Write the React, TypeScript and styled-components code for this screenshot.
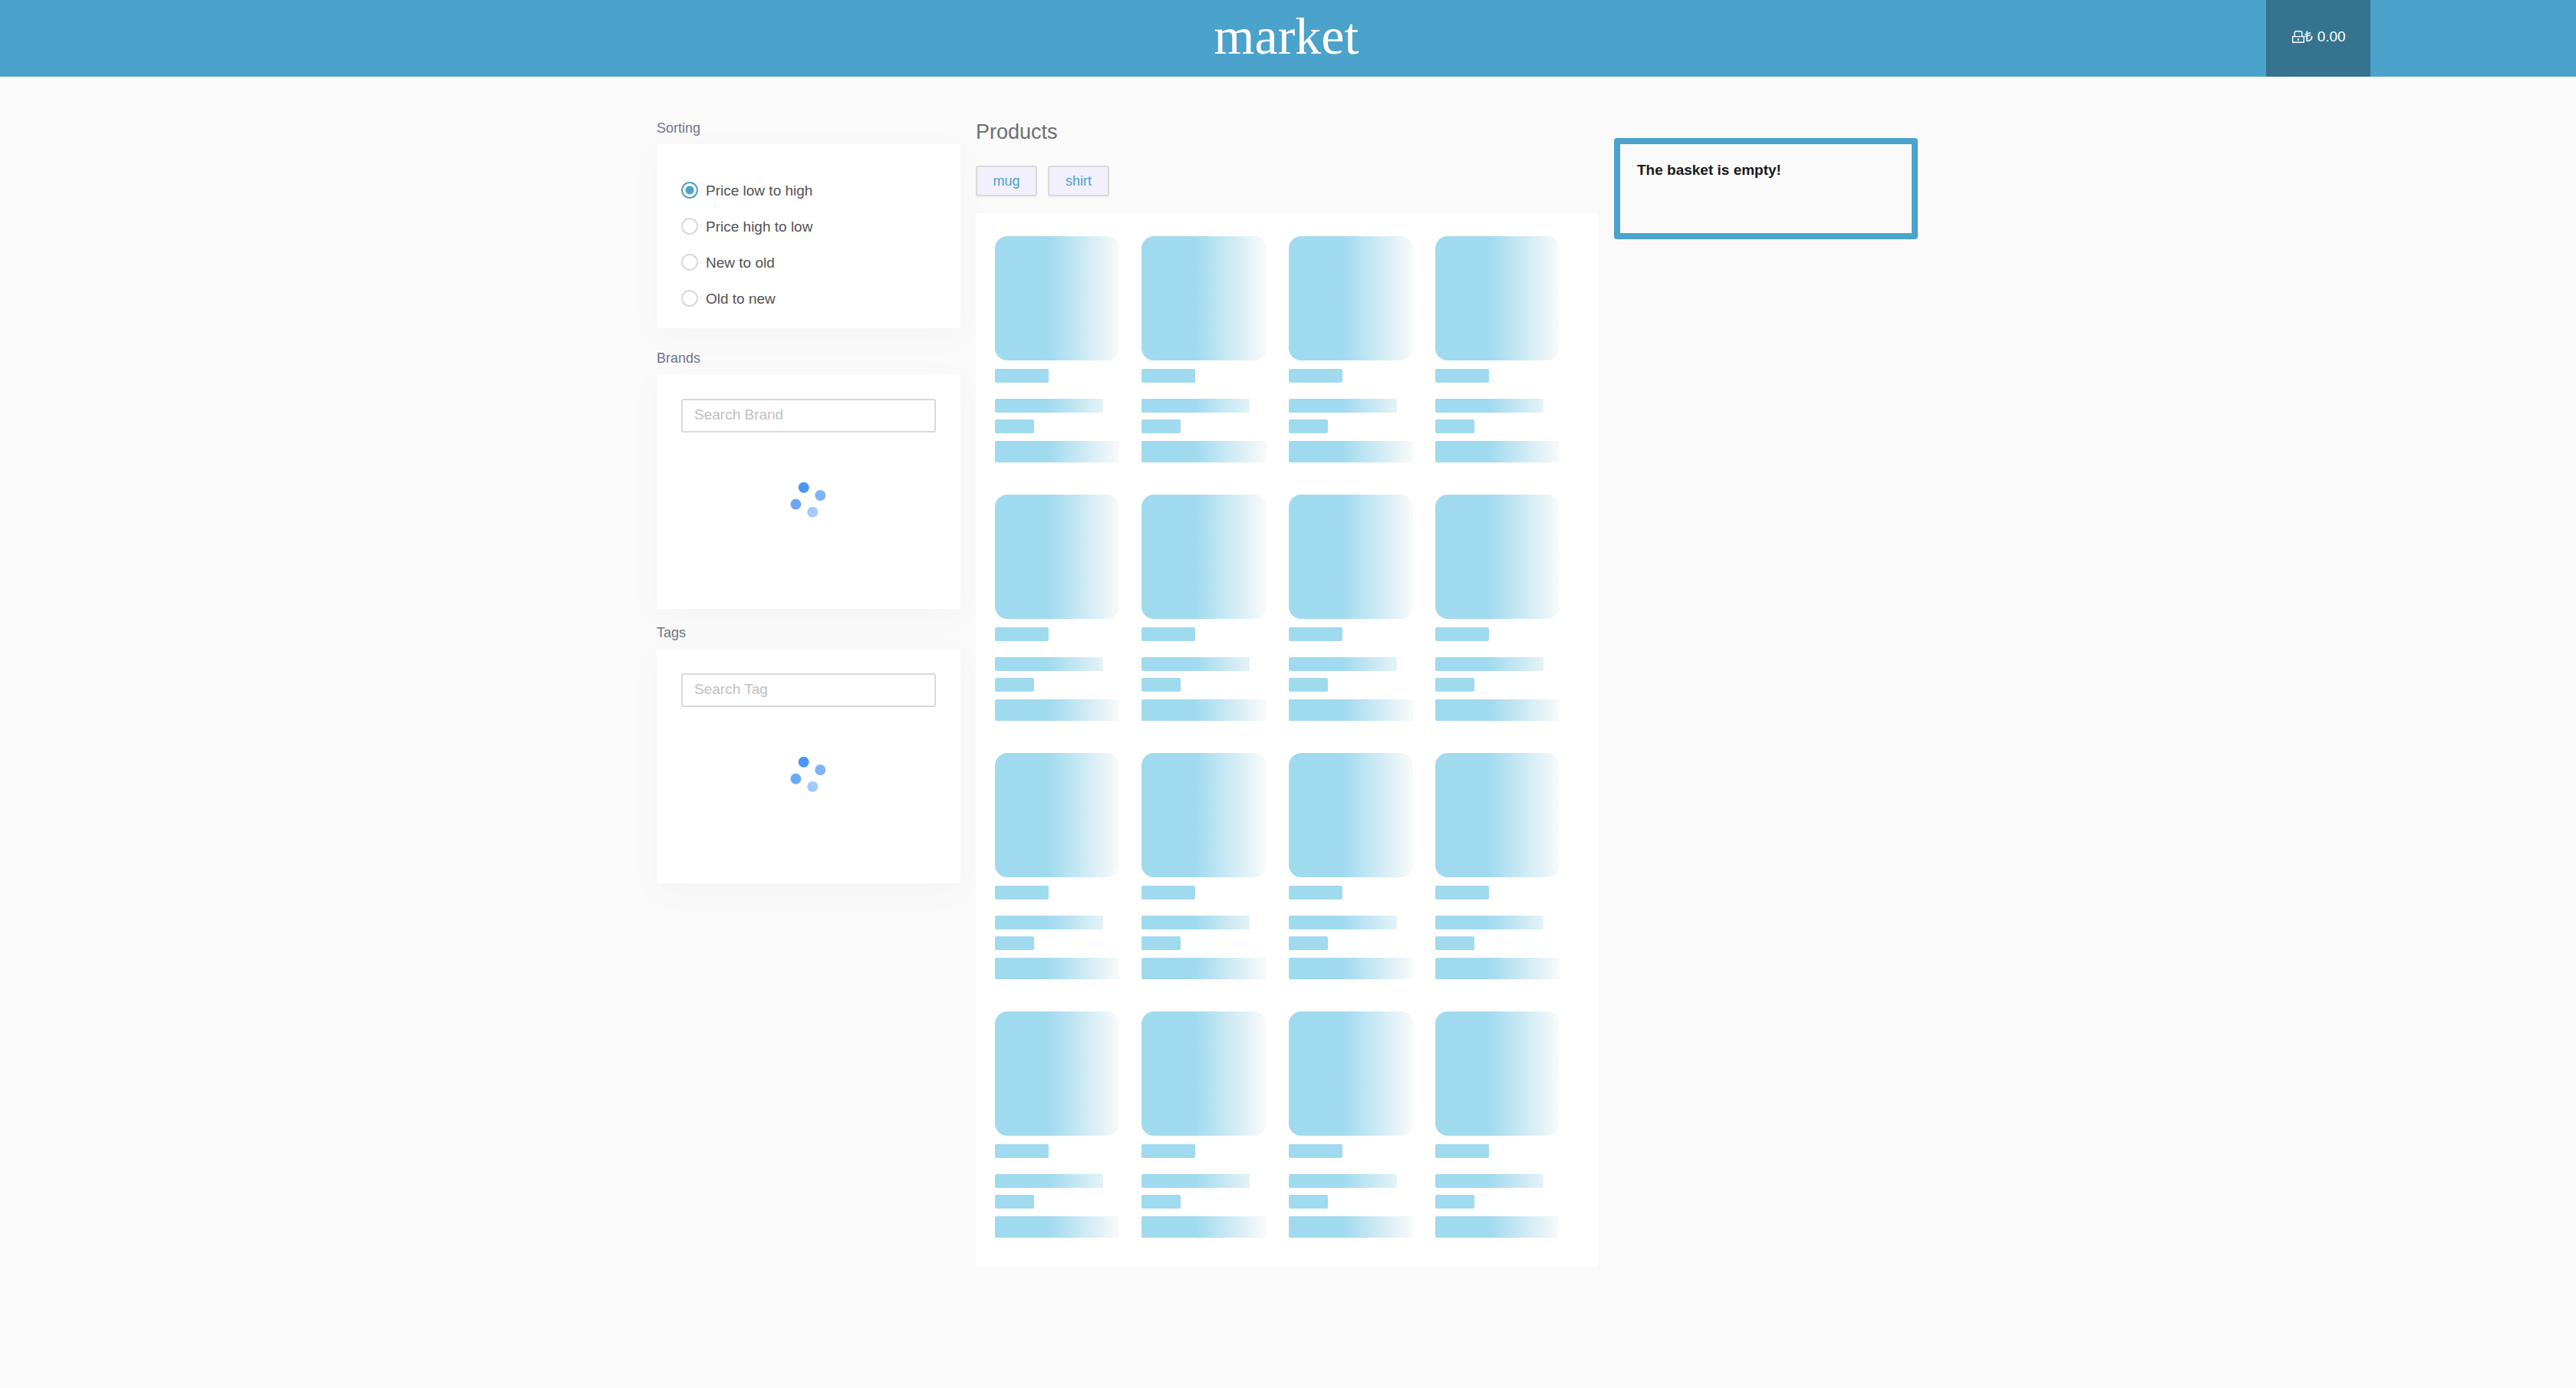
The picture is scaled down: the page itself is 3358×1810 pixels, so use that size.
import React, { useState } from "react";
import styled, { createGlobalStyle } from "styled-components";

const color = {
  primary: "#4ba2ca",
  primaryDark: "#35738f",
  page: "#fafafa",
  line: "#d9d9d9",
  label: "#6f7589",
  text: "#525252",
  heading: "#6f6f6f",
  chip: "#f2f0fd",
  skeleton: "#9fdaef",
};

const GlobalStyle = createGlobalStyle`
  *, *::before, *::after { box-sizing: border-box; }
  body {
    margin: 0;
    min-height: 100vh;
    background: ${color.page};
    color: ${color.text};
    font-family: "Liberation Sans", Arial, sans-serif;
    font-size: 19px;
    line-height: 24px;
  }
  button, input { font: inherit; }
`;

const Header = styled.header`
  display: grid;
  grid-template-columns: 1fr auto 1fr;
  height: 100px;
  padding: 0 268px;
  background: ${color.primary};
`;

const Logo = styled.a`
  grid-column: 2;
  align-self: center;
  padding: 0 4px 6px 0;
  color: #fff;
  font-family: "Liberation Serif", "Times New Roman", serif;
  font-size: 68px;
  line-height: 80px;
  text-decoration: none;
`;

const BasketButton = styled.button`
  justify-self: end;
  display: flex;
  align-items: center;
  justify-content: center;
  width: 136px;
  padding: 0 0 4px 2px;
  border: 0;
  background: ${color.primaryDark};
  color: #fff;
  cursor: pointer;
`;

const Layout = styled.main`
  display: grid;
  grid-template-columns: minmax(0, 396px) minmax(0, 812px) minmax(0, 396px);
  gap: 20px;
  align-items: start;
  max-width: 1646px;
  margin: 0 auto;
  padding-top: 56px;
`;

const Sidebar = styled.aside`
  display: flex;
  flex-direction: column;
`;

const FilterSection = styled.section<{ $gap?: number }>`
  margin-bottom: ${(p) => p.$gap ?? 20}px;
`;

const FilterTitle = styled.h2`
  margin: 0 0 10px;
  color: ${color.label};
  font-size: 18px;
  font-weight: 400;
  line-height: 22px;
`;

const Card = styled.div<{ $padding: string }>`
  padding: ${(p) => p.$padding};
  border-radius: 3px;
  background: #fff;
  box-shadow: 0 10px 40px rgba(93, 90, 188, 0.04);
`;

const RadioRow = styled.label`
  display: flex;
  align-items: center;
  gap: 10px;
  height: 47px;
  cursor: pointer;
`;

const RadioText = styled.span`
  padding-top: 2px;
`;

const Radio = styled.input`
  appearance: none;
  width: 22px;
  height: 22px;
  margin: 0;
  border: 2px solid ${color.line};
  border-radius: 50%;
  background: #fff;
  &:checked {
    border-color: ${color.primary};
    background: radial-gradient(circle, ${color.primary} 5px, #fff 6px);
  }
`;

const SearchInput = styled.input`
  display: block;
  width: 100%;
  height: 44px;
  padding: 0 15px 2px;
  border: 2px solid ${color.line};
  border-radius: 3px;
  background: #fff;
  color: ${color.text};
  outline: 0;
  &::placeholder {
    color: #bfbfbf;
    opacity: 1;
  }
`;

const Loading = styled.div`
  display: flex;
  justify-content: center;
  padding: 68px 0 90px;
`;

const Products = styled.section`
  position: relative;
`;

const ProductsTitle = styled.h1`
  margin: 0;
  color: ${color.heading};
  font-size: 27px;
  font-weight: 400;
  line-height: 32px;
`;

const Chips = styled.div`
  display: flex;
  gap: 14px;
  padding: 28px 0 22px;
`;

const Chip = styled.button`
  width: 80px;
  height: 40px;
  padding: 0;
  border: 2px solid ${color.line};
  border-radius: 3px;
  background: ${color.chip};
  box-shadow: 0 3px 0 rgba(0, 0, 0, 0.02);
  color: ${color.primary};
  font-size: 18px;
  cursor: pointer;
`;

const ProductPanel = styled.div`
  display: grid;
  grid-template-columns: repeat(4, minmax(0, 1fr));
  gap: 42px 29px;
  padding: 30px 51px 38px 25px;
  background: #fff;
`;

const SkeletonCard = styled.div`
  display: flex;
  flex-direction: column;
`;

const Bone = styled.div<{ $w: string; $h: number; $gap?: number; $r?: number }>`
  width: ${(p) => p.$w};
  height: ${(p) => p.$h}px;
  margin-top: ${(p) => p.$gap ?? 0}px;
  border-radius: ${(p) => p.$r ?? 2}px;
  background: linear-gradient(90deg, ${color.skeleton} 42%, ${color.page} 100%) 0 0 / 163px 100% no-repeat;
`;

const BasketColumn = styled.aside`
  padding-top: 24px;
`;

const BasketBox = styled.div`
  min-height: 132px;
  padding: 22px;
  border: 8px solid ${color.primary};
  border-radius: 4px;
  color: #191919;
  font-weight: 700;
`;

const BasketMessage = styled.p`
  margin: 0;
`;

const LockIcon = () => (
  <svg width="16" height="16" viewBox="0 0 16 16" fill="none" stroke="#fff" aria-hidden="true">
    <path d="M3.2 7V2.6Q3.2 .7 5.1 .7h5.8q1.9 0 1.9 1.9V7" strokeWidth="1.4" />
    <path d="M.7 7.6h14.6v7.7H.7z" strokeWidth="1.4" />
    <path d="M8 10v3" strokeWidth="1.8" />
  </svg>
);

const Spinner = () => (
  <svg width="40" height="40" viewBox="0 0 40 40" role="img" aria-label="Loading">
    <circle cx="13.7" cy="3.8" r="7" fill="#4996f7" />
    <circle cx="35.3" cy="14" r="7" fill="#7fb3fa" />
    <circle cx="3.4" cy="25.6" r="7" fill="#6ca8f9" />
    <circle cx="25.3" cy="35.7" r="7" fill="#a3cafc" />
  </svg>
);

const SpinnerBox = styled.div`
  display: flex;
  svg { overflow: visible; }
`;

const sortOptions = ["Price low to high", "Price high to low", "New to old", "Old to new"];
const itemTypes = ["mug", "shirt"];
const searchFilters = [
  { title: "Brands", placeholder: "Search Brand" },
  { title: "Tags", placeholder: "Search Tag" },
];
const skeletons = Array.from({ length: 16 }, (_, i) => i);

export default function App() {
  const [sort, setSort] = useState(sortOptions[0]);

  return (
    <>
      <GlobalStyle />
      <Header>
        <Logo href="#">market</Logo>
        <BasketButton type="button">
          <LockIcon />
          <span>₺ 0.00</span>
        </BasketButton>
      </Header>
      <Layout>
        <Sidebar>
          <FilterSection $gap={28}>
            <FilterTitle>Sorting</FilterTitle>
            <Card $padding="36px 32px 16px">
              {sortOptions.map((option) => (
                <RadioRow key={option}>
                  <Radio
                    type="radio"
                    name="sorting"
                    checked={sort === option}
                    onChange={() => setSort(option)}
                  />
                  <RadioText>{option}</RadioText>
                </RadioRow>
              ))}
            </Card>
          </FilterSection>
          {searchFilters.map(({ title, placeholder }) => (
            <FilterSection key={title}>
              <FilterTitle>{title}</FilterTitle>
              <Card $padding="32px">
                <SearchInput type="text" placeholder={placeholder} aria-label={placeholder} />
                <Loading>
                  <SpinnerBox>
                    <Spinner />
                  </SpinnerBox>
                </Loading>
              </Card>
            </FilterSection>
          ))}
        </Sidebar>
        <Products>
          <ProductsTitle>Products</ProductsTitle>
          <Chips>
            {itemTypes.map((type) => (
              <Chip key={type} type="button">
                {type}
              </Chip>
            ))}
          </Chips>
          <ProductPanel>
            {skeletons.map((id) => (
              <SkeletonCard key={id}>
                <Bone $w="100%" $h={162} $r={16} />
                <Bone $w="70px" $h={18} $gap={11} />
                <Bone $w="141px" $h={18} $gap={21} />
                <Bone $w="51px" $h={18} $gap={9} />
                <Bone $w="100%" $h={28} $gap={10} />
              </SkeletonCard>
            ))}
          </ProductPanel>
        </Products>
        <BasketColumn>
          <BasketBox>
            <BasketMessage>The basket is empty!</BasketMessage>
          </BasketBox>
        </BasketColumn>
      </Layout>
    </>
  );
}
